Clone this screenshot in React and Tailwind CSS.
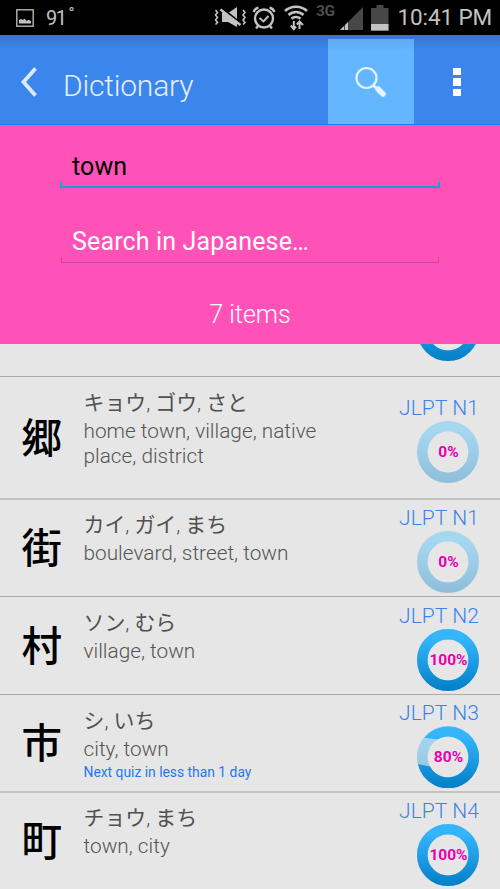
import React from 'react';

const entries = [
  { kanji: '郷', readings: ['キョウ', 'ゴウ', 'さと'], meaning: 'home town, village, native place, district', level: 'N1', percent: 0, size: 'h-[122px] border-t border-[#ababab]', pad: 'pt-[11px]' },
  { kanji: '街', readings: ['カイ', 'ガイ', 'まち'], meaning: 'boulevard, street, town', level: 'N1', percent: 0, size: 'h-[98px] border-t-2 border-[#c2c2c2]', pad: 'pt-[10px]' },
  { kanji: '村', readings: ['ソン', 'むら'], meaning: 'village, town', level: 'N2', percent: 100, size: 'h-[98px] border-t border-[#ababab]', pad: 'pt-[11px]' },
  { kanji: '市', readings: ['シ', 'いち'], meaning: 'city, town', level: 'N3', percent: 80, quiz: 'Next quiz in less than 1 day', size: 'h-[97px] border-t border-[#ababab]', pad: 'pt-[11px]' },
  { kanji: '町', readings: ['チョウ', 'まち'], meaning: 'town, city', level: 'N4', percent: 100, size: 'h-[98px] border-t-2 border-[#c2c2c2]', pad: 'pt-[10px]' },
];

function StatusBar() {
  return (
    <div className="flex h-[35px] shrink-0 items-center bg-black text-[#c2c2c2]">
      <svg className="ml-4 h-[18px] w-[18px]" viewBox="0 0 18 18">
        <rect x="0.8" y="0.8" width="16.4" height="16.4" fill="none" stroke="#b5b5b5" strokeWidth="1.4" />
        <path d="M3 14.500v-3.500l2-1 2 1 1.500-1.500L10.500 12l2-1.200L15 12v2.500z" fill="#c2c2c2" />
      </svg>
      <div className="ml-3 flex h-full w-7 items-center text-[20px] tracking-[-1.500px]">
        91
        <span className="-mt-[8px] ml-[3px] text-[16px]">°</span>
      </div>

      <svg className="ml-[140px] h-[21px] w-[33px]" viewBox="0 0 33 21" fill="none" stroke="#c2c2c2">
        <path d="M1.500 3l2 2.500-2 2.500 2 2.500-2 2.500 2 2.500-2 2M29 3l2 2.500-2 2.500 2 2.500-2 2.500 2 2.500-2 2" strokeWidth="1.600" />
        <path d="M8 5.500h7l8-5.500v20L14 15H8z" fill="#c2c2c2" stroke="none" />
        <path d="M7 0.700l20 16" stroke="#000" strokeWidth="2.500" />
        <path d="M6.500 2.500l20 15.500" strokeWidth="2.400" />
      </svg>
      <svg className="ml-[5px] h-[24px] w-[24px]" viewBox="0 0 24 24" fill="none" stroke="#c2c2c2" strokeWidth="2.400">
        <circle cx="12" cy="12.500" r="9" />
        <path d="M7.500 12l4 3.500 5-5.500" strokeWidth="1.900" />
        <path d="M1.500 6C2.500 3.500 4 2 6.500 1.700M22.500 6C21.500 3.500 20 2 17.500 1.700M6.500 19.500L4 22.500M17.500 19.500L20 22.500" />
      </svg>
      <svg className="ml-[8px] h-[26px] w-[24px]" viewBox="0 0 24 26" fill="none" stroke="#c2c2c2" strokeWidth="2.600">
        <path d="M1 6C7 .3 17 .3 23 6M4.500 10c4.500-4 10.500-4 15 0M7.500 13.700c2.500-2.200 6.500-2.200 9 0" />
        <path d="M9.800 16v8M6.800 20.500l3 3.700 2.200-2.700M15.500 24v-7.500M12.800 19.500l2.700-3 3.500 3.500" strokeWidth="2" />
      </svg>
      <span className="-mt-[11px] ml-2 text-[15.500px] font-bold leading-none tracking-[-0.500px] text-[#4d4d4d]">3G</span>
      <svg className="ml-[6px] h-[24px] w-[23px]" viewBox="0 0 23 24">
        <path d="M0 24L23 1v23z" fill="#474747" />
        <path d="M0 24l4-4v4zM5 24v-5l3-3v8z" fill="#c2c2c2" />
      </svg>
      <svg className="ml-[8px] h-[26px] w-[18px]" viewBox="0 0 18 26">
        <path d="M5.500 0h7v3H17.500v23H0V3h5.500z" fill="#474747" />
        <path d="M0 19h17.500v6.500H0z" fill="#c2c2c2" />
      </svg>
      <span className="ml-[8px] whitespace-nowrap text-[22.500px] tracking-[-0.100px]">10:41 PM</span>
    </div>
  );
}

function ActionBar() {
  return (
    <header className="flex h-[90px] shrink-0 items-end border-b border-[#1685f5] bg-[#3a86ec] bg-linear-to-b from-[#3475cf] to-[#3a86ec] to-15%">
      <div className="flex h-[85px] flex-1 items-center">
        <svg className="ml-[20px] h-[30px] w-[18px]" viewBox="0 0 18 30">
          <path d="M15.500 1.500L3.500 15l12 13.500" fill="none" stroke="#deebff" strokeWidth="3.800" />
        </svg>
        <h1 className="ml-[25px] mt-[9px] text-[30px] font-light leading-none tracking-[-0.200px] text-[#e3eeff]">Dictionary</h1>
      </div>
      <button className="h-[85px] w-[86px] bg-[#63b6ff] bg-linear-to-b from-[#5eabf0] to-[#63b6ff] to-15%">
        <svg className="ml-[27px] h-[34px] w-[34px]" viewBox="0 0 34 34">
          <circle cx="11.500" cy="13" r="10" fill="none" stroke="#e4f3ff" strokeWidth="2.200" />
          <path d="M18.500 20.500l4 4" stroke="#e4f3ff" strokeWidth="2.500" />
          <path d="M23 24l5 5" stroke="#e4f3ff" strokeWidth="5.500" strokeLinecap="round" />
        </svg>
      </button>
      <button className="flex h-[84px] w-[86px] flex-col items-center justify-center gap-[3px]">
        <span className="h-[7.500px] w-2 bg-white" />
        <span className="h-[7.500px] w-2 bg-white" />
        <span className="h-[7.500px] w-2 bg-white" />
      </button>
    </header>
  );
}

function SearchPanel() {
  return (
    <section className="flex h-[219px] shrink-0 flex-col items-center bg-[#ff52b8] text-[25px]">
      <div className="mt-[23px] flex h-[40px] w-[380px] flex-col justify-between">
        <span className="pl-3 leading-[38px] tracking-[0.100px] text-black">town</span>
        <div className="-mt-[4px] h-[6px] shrink-0 border-x-2 border-b-2 border-[#159fd3]" />
      </div>
      <div className="mt-[35px] flex h-[40px] w-[378px] flex-col justify-between">
        <span className="pl-[11px] leading-[38px] tracking-[0.150px] text-white">Search in Japanese…</span>
        <div className="-mt-[4px] h-[6px] shrink-0 border-x border-b border-[#c8479a]" />
      </div>
      <p className="mt-[33px] text-[25px] font-light leading-[38px] text-white">7 items</p>
    </section>
  );
}

function ProgressRing({ percent, showLabel = true }) {
  return (
    <div className="relative h-[62px] w-[62px]">
      <svg className="h-full w-full" viewBox="0 0 62 62" fill="none">
        <defs>
          <linearGradient id="track" gradientUnits="userSpaceOnUse" x1="31" y1="0" x2="31" y2="62">
            <stop offset="0.150" stopColor="#a6d7f1" />
            <stop offset="0.950" stopColor="#90bfdc" />
          </linearGradient>
          <linearGradient id="fill" gradientUnits="userSpaceOnUse" x1="31" y1="0" x2="31" y2="62">
            <stop offset="0.150" stopColor="#34b5fc" />
            <stop offset="0.950" stopColor="#0582c9" />
          </linearGradient>
        </defs>
        <circle cx="31" cy="31" r="25.700" stroke="url(#track)" strokeWidth="10.600" />
        {percent === 100 && <circle cx="31" cy="31" r="25.700" stroke="url(#fill)" strokeWidth="10.600" />}
        {percent === 80 && (
          <path d="M7.250 11.700A31 31 0 1 1 .9 38L13 40.500A20.400 20.400 0 1 0 20.500 13.500z" fill="url(#fill)" />
        )}
      </svg>
      {showLabel && (
        <span className="absolute inset-0 flex items-center justify-center pl-px pt-0.5 text-[15.500px] font-bold text-[#e800b0]">{percent}%</span>
      )}
    </div>
  );
}

function EntryRow({ entry }) {
  return (
    <li className={`flex shrink-0 items-center ${entry.size}`}>
      <span className="-mt-[3px] ml-[21.500px] w-[62px] font-['Noto_Sans_CJK_JP',sans-serif] text-[40.500px] font-medium leading-none text-black">{entry.kanji}</span>
      <div className={`h-full w-[250px] ${entry.pad}`}>
        <p className="font-['Roboto','Noto_Sans_CJK_JP',sans-serif] text-[20.900px] leading-[30px] text-[#505050]">
          {entry.readings.map((reading, i) => (
            <React.Fragment key={reading}>
              {i > 0 && <span className="font-light">, </span>}
              {reading}
            </React.Fragment>
          ))}
        </p>
        <p className="mt-px text-[20.800px] font-light leading-[24.500px] text-[#555]">{entry.meaning}</p>
        {entry.quiz && <p className="text-[13.850px] leading-[20px] text-[#1d7af3]">{entry.quiz}</p>}
      </div>
      <div className="ml-[65.500px] flex h-[86px] w-[96px] flex-col">
        <span className="whitespace-nowrap text-[21px] font-light leading-[26px] tracking-[0.100px] text-[#3983ee]">JLPT {entry.level}</span>
        <div className="ml-[18px]">
          <ProgressRing percent={entry.percent} />
        </div>
      </div>
    </li>
  );
}

export default function App() {
  return (
    <main className="flex h-[889px] w-[500px] flex-col overflow-hidden bg-[#e6e6e6] font-['Roboto',sans-serif]">
      <StatusBar />
      <ActionBar />
      <SearchPanel />
      <div className="flex h-8 shrink-0 items-end justify-end overflow-hidden pb-[15px] pr-[21px]">
        <ProgressRing percent={100} showLabel={false} />
      </div>
      <ul className="flex flex-col">
        {entries.map(entry => (
          <EntryRow key={entry.kanji} entry={entry} />
        ))}
      </ul>
    </main>
  );
}
